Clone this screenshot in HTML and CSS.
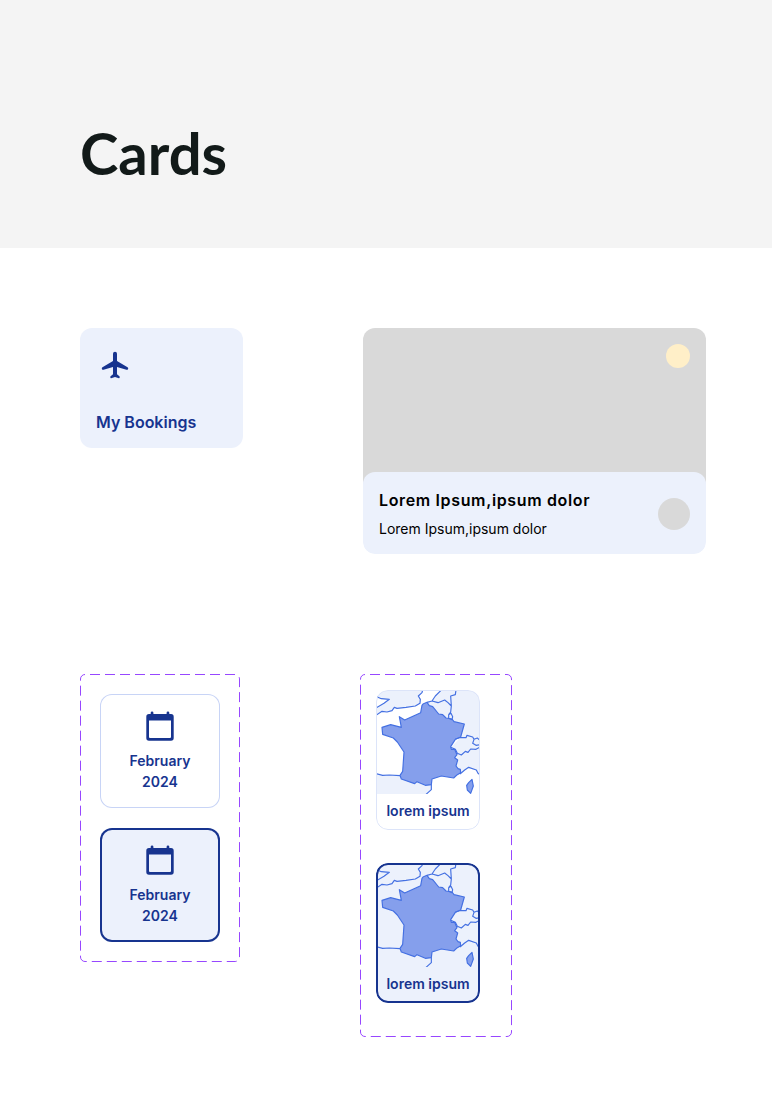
FILE: index.html
```html
<!DOCTYPE html>
<html lang="en">
<head>
<meta charset="utf-8">
<meta name="viewport" content="width=device-width, initial-scale=1">
<title>Cards</title>
<link rel="stylesheet" href="styles.css">
</head>
<body>
<svg class="defs" aria-hidden="true">
  <symbol id="calendar" viewBox="0 0 28 30">
    <path fill="currentColor" fill-rule="evenodd" d="M4.7 3V1.8a1.35 1.35 0 0 1 2.7 0V3h13.2V1.8a1.35 1.35 0 0 1 2.7 0V3H25a2.7 2.7 0 0 1 2.7 2.7V27a2.7 2.7 0 0 1-2.7 2.7H3A2.7 2.7 0 0 1 .3 27V5.7A2.7 2.7 0 0 1 3 3zM3 9.4V26a1 1 0 0 0 1 1h20a1 1 0 0 0 1-1V9.4z"/>
  </symbol>
  <symbol id="map" viewBox="15 15 306 309" preserveAspectRatio="xMidYMid slice">
    <g fill="#ecf1fc">
      <path d="M15 15V32L28 38 52 40 36 52 15 64V86L30 76 45 78 60 74 67 64 75 67 102 64 130 60 144 52 145 40 139 30 150 20 152 15z"/>
      <path d="M206 15L190 30 180 45 165 49 172 59 200 84 246 107 277 114 266 153 236 186 254 206 252 240 265 262 290 244 313 252 321 264V15z"/>
      <path d="M15 264L32 268 84 269 88 279 178 296V310L164 324H15z"/>
    </g>
    <g stroke="#4470e2" stroke-width="3.5" stroke-linejoin="round" fill="none">
      <path fill="#859fec" d="M150 58L153 54 165 49 172 59 182 62 200 84 212 86 222 96 240 99 246 107 277 114 266 153 250 160 236 182 238 190 248 190 255 206 248 215 257 222 252 240 258 248 265 250 266 260 256 266 245 276 208 270 180 279 178 296 160 298 135 287 128 293 88 279 84 268 92 256 96 198 76 168 64 156 32 145 30 124 56 116 88 124 82 92 98 102 146 80z"/>
      <path d="M12 31L28 38 52 40 36 52 12 66M12 88L30 76 45 78 60 74 67 64 75 67 102 64 130 60 144 52 145 40 139 30 150 20 152 12"/>
      <path d="M208 12L190 30 180 45 165 49M180 45L198 50 218 42 228 50 238 60 236 78 230 86M252 12L250 26 236 30 238 60M230 86L237 82 242 92 240 101 230 97z"/>
      <path d="M250 160L262 155 282 155 285 148 302 153 306 160 316 156 323 162M306 160L302 172 312 178 323 176M236 184L250 190 256 202 268 207 280 196 288 199 296 189 312 190 323 184"/>
      <path d="M12 263L32 268 52 267 84 269M178 296V311L162 325M264 264L278 252 290 244 313 252 318 262 324 266"/>
      <path fill="#859fec" d="M300 280L304 300 296 322 286 312 284 298 290 290z"/>
    </g>
  </symbol>
</svg>

<header class="page-header">
  <h1 class="page-title">Cards</h1>
</header>

<main class="content">
  <div class="row">
    <a class="shortcut" href="#bookings">
      <svg class="shortcut-icon" viewBox="0 0 24 24" aria-hidden="true"><path fill="currentColor" d="M21.4 13.7L13.5 9V3.5a1.5 1.5 0 0 0-3 0V9L2.6 13.7c-.3.2-.5.5-.5.9 0 .7.6 1.2 1.3 1l7.1-2.1V19l-1.8 1.4c-.1.1-.2.2-.2.4v.6c0 .3.3.6.6.5L12 21l2.9.9c.3.1.6-.2.6-.5v-.6c0-.2-.1-.3-.2-.4L13.5 19v-5.5l7.1 2.1c.7.2 1.3-.3 1.3-1 0-.4-.2-.7-.5-.9z"/></svg>
      <span class="shortcut-label">My Bookings</span>
    </a>
    <article class="media-card">
      <div class="media"><span class="badge"></span></div>
      <div class="media-panel">
        <div class="media-text">
          <h2 class="media-title">Lorem Ipsum,ipsum dolor</h2>
          <p class="media-subtitle">Lorem Ipsum,ipsum dolor</p>
        </div>
        <span class="avatar"></span>
      </div>
    </article>
  </div>

  <div class="row">
    <section class="frame frame-dates" aria-label="Month">
      <svg class="frame-line" aria-hidden="true"><rect class="frame-rect" x="0.5" y="0.5" rx="4.5"/></svg>
      <button class="date-card" type="button" aria-pressed="false">
        <svg class="date-icon" aria-hidden="true"><use href="#calendar"/></svg>
        <span>February<br>2024</span>
      </button>
      <button class="date-card selected" type="button" aria-pressed="true">
        <svg class="date-icon" aria-hidden="true"><use href="#calendar"/></svg>
        <span>February<br>2024</span>
      </button>
    </section>
    <section class="frame frame-places" aria-label="Country">
      <svg class="frame-line" aria-hidden="true"><rect class="frame-rect" x="0.5" y="0.5" rx="4.5"/></svg>
      <button class="place-card" type="button" aria-pressed="false">
        <svg class="place-map" aria-hidden="true"><use href="#map"/></svg>
        <span class="place-label">lorem ipsum</span>
      </button>
      <button class="place-card selected" type="button" aria-pressed="true">
        <svg class="place-map" aria-hidden="true"><use href="#map"/></svg>
        <span class="place-label">lorem ipsum</span>
      </button>
    </section>
  </div>
</main>
</body>
</html>
```

FILE: styles.css
```css
:root {
  --navy: #17348f;
  --tint: #ecf1fc;
  --grey: #d9d9d9;
}

* {
  box-sizing: border-box;
}

body {
  margin: 0;
  background: #fff;
  color: #000;
  font-family: Inter, "Liberation Sans", sans-serif;
}

button {
  margin: 0;
  font: inherit;
  cursor: pointer;
}

.defs {
  display: none;
}

.page-header {
  padding: 119px 80px 61px;
  background: #f4f4f4;
}

.page-title {
  margin: 0;
  color: #121a19;
  font: 700 58px/68px Lato, "Open Sans", sans-serif;
}

.content {
  display: flex;
  flex-direction: column;
  gap: 120px;
  padding: 80px 66px 80px 80px;
}

.row {
  display: flex;
  align-items: flex-start;
  gap: 120px;
}

.shortcut {
  display: flex;
  flex: 0 0 163px;
  flex-direction: column;
  gap: 29px;
  padding: 21px 16px 13px;
  border-radius: 12px;
  background: var(--tint);
  color: var(--navy);
  text-decoration: none;
}

.shortcut-icon {
  width: 32px;
  height: 32px;
  margin-left: 3px;
}

.shortcut-label {
  font-size: 16px;
  font-weight: 600;
  line-height: 25px;
}

.media-card {
  flex: 0 1 343px;
  overflow: hidden;
  border-radius: 12px;
  background: linear-gradient(var(--grey) 156px, transparent 156px);
}

.media {
  display: flex;
  justify-content: flex-end;
  height: 144px;
  padding: 16px;
}

.badge {
  width: 24px;
  height: 24px;
  border-radius: 50%;
  background: #ffefc8;
}

.media-panel {
  display: flex;
  align-items: center;
  justify-content: space-between;
  padding: 16px 16px 14px;
  border-radius: 12px;
  background: var(--tint);
}

.media-title {
  margin: 0 0 6px;
  font-size: 16px;
  font-weight: 600;
  line-height: 24px;
  letter-spacing: 0.04em;
}

.media-subtitle {
  margin: 0;
  font-size: 14px;
  line-height: 22px;
}

.avatar {
  width: 32px;
  height: 32px;
  border-radius: 50%;
  background: var(--grey);
}

.frame {
  position: relative;
  display: flex;
  flex-direction: column;
}

.frame-line {
  position: absolute;
  inset: 0;
  width: 100%;
  height: 100%;
  pointer-events: none;
}

.frame-rect {
  width: calc(100% - 1px);
  height: calc(100% - 1px);
  fill: none;
  stroke: #9747ff;
  stroke-dasharray: 10 5;
  stroke-dashoffset: -5px;
}

.frame-dates {
  gap: 20px;
  padding: 20px;
}

.frame-places {
  gap: 33px;
  padding: 16px 32px 34px 16px;
}

.date-card {
  display: flex;
  flex-direction: column;
  align-items: center;
  gap: 9px;
  width: 120px;
  height: 114px;
  padding: 17px 0 0;
  border: 0;
  border-radius: 12px;
  background: #fff;
  box-shadow: inset 0 0 0 1px #c8d4f6;
  color: var(--navy);
  font-size: 14px;
  font-weight: 600;
  line-height: 21px;
}

.date-card.selected {
  background: var(--tint);
  box-shadow: inset 0 0 0 2px var(--navy);
}

.date-icon {
  width: 28px;
  height: 30px;
}

.place-card {
  position: relative;
  display: flex;
  flex-direction: column;
  width: 104px;
  height: 140px;
  padding: 1px;
  overflow: hidden;
  border: 0;
  border-radius: 12px;
  background: #fff;
  color: var(--navy);
}

.place-card::after {
  position: absolute;
  inset: 0;
  border: 1px solid #dce4f9;
  border-radius: 12px;
  content: "";
}

.place-card.selected {
  background: var(--tint);
}

.place-card.selected::after {
  border: 2px solid var(--navy);
}

.place-map {
  width: 100%;
  height: 103px;
}

.place-label {
  width: 100%;
  padding-top: 6px;
  font-size: 14px;
  font-weight: 600;
  line-height: 21px;
  text-align: center;
}
```
